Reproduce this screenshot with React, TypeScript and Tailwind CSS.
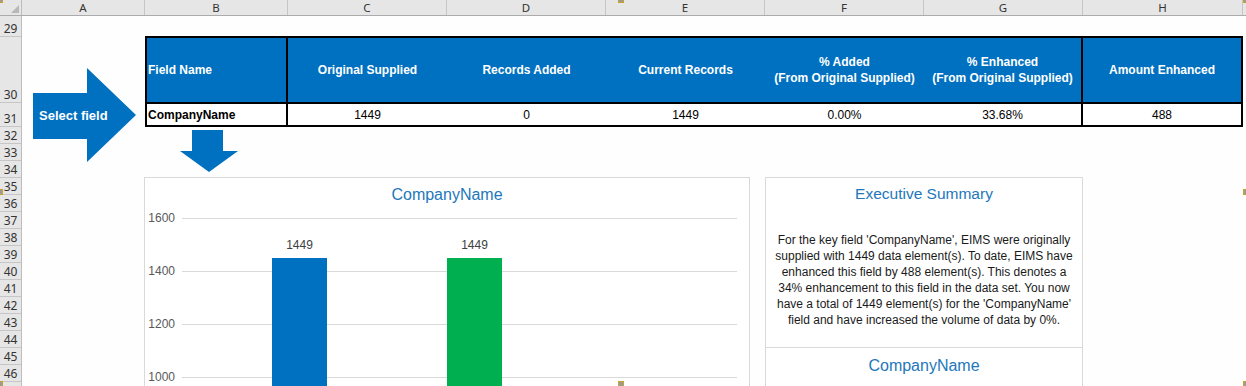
const cols = [
  { l: "A", w: "w-[123px]" },
  { l: "B", w: "w-[143px]" },
  { l: "C", w: "w-[159px]" },
  { l: "D", w: "w-[159px]" },
  { l: "E", w: "w-[159px]" },
  { l: "F", w: "w-[159px]" },
  { l: "G", w: "w-[159px]" },
  { l: "H", w: "w-[160px]" },
];

const rows = [
  { n: 29, h: "h-[21px]" },
  { n: 30, h: "h-[66px]" },
  { n: 31, h: "h-[24px]" },
  ...Array.from({ length: 15 }, (_, i) => ({ n: 32 + i, h: "h-[17px]" })),
];

const headers = [
  { t: ["Original Supplied"], w: "w-[159px]" },
  { t: ["Records Added"], w: "w-[159px]" },
  { t: ["Current Records"], w: "w-[159px]" },
  { t: ["% Added", "(From Original Supplied)"], w: "w-[159px]" },
  { t: ["% Enhanced", "(From Original Supplied)"], w: "w-[159px] border-r-2 border-black" },
];

const values = ["1449", "0", "1449", "0.00%", "33.68%"];

const bars = [
  { v: 1449, c: "bg-[#0070c0]" },
  { v: 1449, c: "bg-[#00b050]" },
];

const ticks = ["1600", "1400", "1200", "1000"];

function Handle({ className }: { className: string }) {
  return <div className={`absolute h-[6px] w-[6px] border border-[#c9a227] bg-[#9a9a9a] ${className}`} />;
}

export default function App() {
  return (
    <div
      className="relative h-[386px] w-[1246px] overflow-hidden bg-[#fefefe] text-black"
      style={{ fontFamily: '"Liberation Sans", Arial, sans-serif' }}
    >
      {/* Column headers */}
      <div
        className="flex h-[16px] border-b border-[#ababab] bg-[#e6e6e6] text-[11.5px] text-[#333]"
        style={{ fontFamily: '"Noto Sans", sans-serif' }}
      >
        <div className="relative w-[22px] border-r border-[#bdbdbd]">
          <div className="absolute bottom-[2px] right-[2px] h-0 w-0 border-b-[8px] border-l-[8px] border-b-[#b8b8b8] border-l-transparent" />
        </div>
        {cols.map((c) => (
          <div key={c.l} className={`${c.w} flex items-center justify-center border-r border-[#c6c6c6] leading-none`}>
            {c.l}
          </div>
        ))}
        <div className="flex-1" />
      </div>

      <div className="flex">
        {/* Row headers */}
        <div
          className="h-[400px] w-[22px] shrink-0 border-r border-[#bdbdbd] bg-[#e6e6e6] text-[12px] text-[#333]"
          style={{ fontFamily: '"Noto Sans", sans-serif' }}
        >
          {rows.map((r) => (
            <div key={r.n} className={`${r.h} flex items-end justify-center border-b border-[#c6c6c6] leading-[15px]`}>
              {r.n}
            </div>
          ))}
        </div>

        {/* Column A: select field arrow */}
        <div className="w-[123px] shrink-0">
          <div className="relative ml-[11px] mt-[52px] h-[94px] w-[103px]">
            <svg className="absolute inset-0" width="103" height="94" viewBox="0 0 103 94">
              <polygon points="0,25 54,25 54,0 103,47 54,94 54,71 0,71" fill="#0070c0" />
            </svg>
            <span className="relative block pl-[6px] pt-[40px] text-[13px] font-bold leading-[16px] text-white">
              Select field
            </span>
          </div>
        </div>

        {/* Main area */}
        <div className="flex flex-col pt-[20px]">
          <div className="w-[1098px] border-2 border-black text-[12px]">
            <div className="flex h-[66px] border-b-2 border-black bg-[#0070c0] font-bold text-white">
              <div className="flex w-[141px] items-center border-r-2 border-black pl-[1px]">Field Name</div>
              {headers.map((h) => (
                <div key={h.t.join()} className={`${h.w} flex flex-col items-center justify-center leading-[16px]`}>
                  {h.t.map((line) => (
                    <span key={line}>{line}</span>
                  ))}
                </div>
              ))}
              <div className="flex flex-1 items-center justify-center">Amount Enhanced</div>
            </div>
            <div className="flex h-[21px] items-center bg-white">
              <div className="flex h-full w-[141px] items-center border-r-2 border-black pl-[1px] font-bold">CompanyName</div>
              {values.map((v, i) => (
                <div
                  key={i}
                  className={`flex h-full w-[159px] items-center justify-center ${i === 4 ? "border-r-2 border-black" : ""}`}
                >
                  {v}
                </div>
              ))}
              <div className="flex flex-1 items-center justify-center">488</div>
            </div>
          </div>

          <svg className="ml-[35px] mt-[3px]" width="58" height="42" viewBox="0 0 58 42">
            <polygon points="12,0 43,0 43,21 58,21 29,42 0,21 12,21" fill="#0070c0" />
          </svg>

          <div className="mt-[5px] flex gap-[15px]">
            {/* Chart */}
            <div className="-ml-px h-[240px] w-[606px] border border-[#d9d9d9] bg-white">
              <div className="pt-[7px] text-center text-[16px] leading-[20px] text-[#2277bb]">CompanyName</div>
              <div className="relative mt-[13px] text-[12px] text-[#595959]">
                {ticks.map((t) => (
                  <div key={t} className="flex h-[53px]">
                    <span className="-mt-[8px] w-[30px] text-right leading-[16px]">{t}</span>
                    <div className="ml-[7px] mr-[12px] flex-1 border-t border-[#d9d9d9]" />
                  </div>
                ))}
                {bars.map((b, i) => {
                  const top = ((1600 - b.v) * 53) / 200;
                  const left = 127 + i * 175;
                  return (
                    <div key={i}>
                      <div
                        className="absolute w-[55px] text-center leading-[16px] text-[#404040]"
                        style={{ left, top: top - 21 }}
                      >
                        {b.v}
                      </div>
                      <div className={`absolute h-[300px] w-[55px] ${b.c}`} style={{ left, top }} />
                    </div>
                  );
                })}
              </div>
            </div>

            {/* Executive summary */}
            <div className="h-[240px] w-[318px] border border-[#d9d9d9] bg-white">
              <div className="pt-[6px] text-center text-[15.5px] leading-[20px] text-[#2277bb]">Executive Summary</div>
              <p className="mt-[28px] px-[4px] pb-[19px] text-center text-[12px] leading-[16px] text-[#1a1a1a]">
                For the key field 'CompanyName', EIMS were originally supplied with 1449 data element(s). To date, EIMS
                have enhanced this field by 488 element(s). This denotes a 34% enhancement to this field in the data
                set. You now have a total of 1449 element(s) for the 'CompanyName' field and have increased the volume
                of data by 0%.
              </p>
              <div className="border-t border-[#d9d9d9] pt-[8px] text-center text-[16px] leading-[20px] text-[#2277bb]">
                CompanyName
              </div>
            </div>
          </div>
        </div>
      </div>

      {/* Selection handles */}
      <Handle className="-left-[3px] -top-[3px]" />
      <Handle className="left-[618px] -top-[3px]" />
      <Handle className="-right-[3px] -top-[3px]" />
      <Handle className="-left-[3px] top-[189px]" />
      <Handle className="-right-[3px] top-[189px]" />
      <Handle className="-left-[3px] top-[381px]" />
      <Handle className="left-[618px] top-[381px]" />
      <Handle className="-right-[3px] top-[381px]" />
    </div>
  );
}
